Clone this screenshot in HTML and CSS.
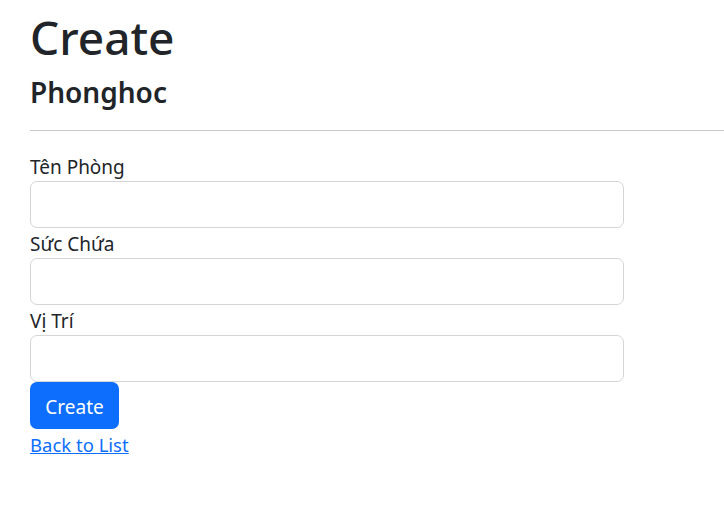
FILE: index.html
```html
<!DOCTYPE html>
<html lang="vi">
<head>
<meta charset="utf-8">
<title>Create</title>
<link rel="stylesheet" href="styles.css">
</head>
<body>
<main class="page">
  <h1 class="title">Create</h1>
  <h4 class="subtitle">Phonghoc</h4>
  <hr class="divider">
  <form class="form">
    <div class="group">
      <label class="label">Tên Phòng</label>
      <input class="control" type="text">
    </div>
    <div class="group">
      <label class="label">Sức Chứa</label>
      <input class="control" type="text">
    </div>
    <div class="group">
      <label class="label">Vị Trí</label>
      <input class="control" type="text">
    </div>
    <button class="btn" type="button">Create</button>
  </form>
  <a class="back" href="#">Back to List</a>
</main>
</body>
</html>
```
FILE: styles.css
```css
html, body {
  margin: 0;
  padding: 0;
  background: #fff;
  overflow: hidden;
}
body {
  font-family: "Noto Sans", "Open Sans", sans-serif;
  color: #212529;
  font-size: 19px;
}
.page {
  padding-left: 30px;
}
.title {
  font-size: 46px;
  font-weight: 500;
  line-height: 60px;
  margin: 7px 0 7px;
}
.subtitle {
  font-size: 28px;
  font-weight: 600;
  line-height: 36px;
  margin: 0 0 20px;
}
.divider {
  margin: 0 0 20px;
  border: 0;
  border-top: 1px solid #c8c9ca;
  height: 0;
}
.form {
  display: flex;
  flex-direction: column;
  align-items: flex-start;
}
.group {
  display: flex;
  flex-direction: column;
}
.label {
  line-height: 33px;
  height: 30px;
}
.control {
  box-sizing: border-box;
  width: 594px;
  height: 47px;
  border: 1px solid #d3d5d9;
  border-radius: 7px;
  margin: 0;
  background: #fff;
}
.btn {
  box-sizing: border-box;
  width: 89px;
  height: 47px;
  border: 0;
  border-radius: 7px;
  background: #0d6efd;
  color: #fff;
  font-family: inherit;
  font-size: 19px;
  padding: 2px 0 0;
  margin: 0;
}
.back {
  display: inline-block;
  font-size: 18.5px;
  line-height: 30px;
  color: #0d6efd;
  text-decoration: underline;
  margin-top: 1px;
}
```
